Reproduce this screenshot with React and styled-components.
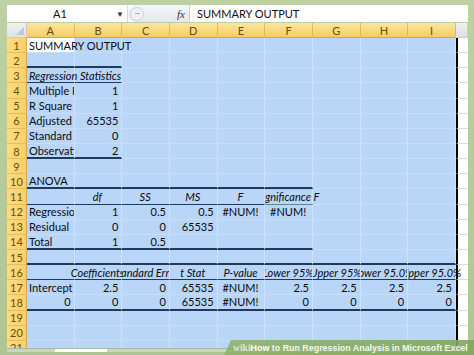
import React from "react";
import styled, { createGlobalStyle } from "styled-components";

const GlobalStyle = createGlobalStyle`
  html, body {
    margin: 0;
    padding: 0;
  }
  body {
    width: 474px;
    height: 355px;
    overflow: hidden;
    background: #b4ca98;
    font-family: Lato, "Open Sans", sans-serif;
  }
`;

const Window = styled.div`
  position: relative;
  width: 474px;
  height: 355px;
  box-sizing: border-box;
  padding: 5px 6px 0 7px;
  background: linear-gradient(#bdd1a3, #aec593);
  overflow: hidden;
`;

const FormulaBar = styled.div`
  display: flex;
  height: 17px;
  margin-bottom: 1px;
  background: #fff;
  font-size: 11px;
  color: #111;
`;

const NameBox = styled.div`
  width: 120px;
  display: grid;
  grid-template-columns: 1fr 14px;
  align-items: center;
  justify-items: center;
  border-right: 1px solid #d3d8de;
`;

const Caret = styled.span`
  font-size: 8px;
  color: #333;
`;

const FxArea = styled.div`
  width: 62px;
  display: flex;
  align-items: center;
  justify-content: space-between;
  padding: 0 4px 0 2px;
  box-sizing: border-box;
  background: linear-gradient(#f4f6f8, #e4e8ec);
  border-radius: 8px 0 0 8px;
  border-right: 1px solid #c9ced5;
`;

const Grip = styled.span`
  width: 12px;
  height: 12px;
  border-radius: 50%;
  background: #eef1f4;
  border: 1px solid #cdd3da;
  display: flex;
  align-items: center;
  justify-content: center;
  &::after {
    content: "";
    width: 5px;
    height: 1px;
    background: #a9b0b8;
  }
`;

const Fx = styled.span`
  font-family: "Liberation Serif", serif;
  font-style: italic;
  font-size: 11px;
  color: #333;
`;

const FormulaInput = styled.div`
  flex: 1;
  display: flex;
  align-items: center;
  padding-left: 7px;
`;

const Sheet = styled.div`
  display: grid;
  grid-template-columns: 20px repeat(9, 47.67px) 12px;
  grid-template-rows: 15px repeat(21, 15.15px);
  height: 325px;
  overflow: hidden;
  font-size: 11px;
`;

const Corner = styled.div`
  background: linear-gradient(#eef0f2, #dfe2e6);
  border-right: 1px solid #c9cdd3;
  border-bottom: 1px solid #c9cdd3;
  display: flex;
  align-items: flex-end;
  justify-content: flex-end;
  padding: 0 2px 2px 0;
`;

const CornerMark = styled.span`
  width: 8px;
  height: 8px;
  background: #c3c8ce;
  clip-path: polygon(100% 0, 100% 100%, 0 100%);
`;

const ColHeader = styled.div`
  box-sizing: border-box;
  display: flex;
  align-items: center;
  justify-content: center;
  background: ${(p) =>
    p.$blank
      ? "linear-gradient(#eef0f3, #dcdfe4)"
      : "linear-gradient(#fce5a0, #f6cd62)"};
  border-right: 1px solid ${(p) => (p.$blank ? "#c9cdd3" : "#e6bb55")};
  border-bottom: 1px solid ${(p) => (p.$blank ? "#c9cdd3" : "#e2a33a")};
  color: #6b4c0c;
`;

const RowHeader = styled.div`
  box-sizing: border-box;
  display: flex;
  align-items: center;
  justify-content: center;
  background: linear-gradient(90deg, #fbdc84, #f8d068);
  border-right: 1px solid #e3a53a;
  border-bottom: 1px solid #e8bd5c;
  color: #6b4c0c;
`;

const lineStyle = {
  thick: "2px solid #1e3a5c",
  thin: "1px solid #1e3a5c",
};

const clipFor = {
  right: "inset(0 -60px 0 0)",
  left: "inset(0 0 0 -60px)",
};

const Cell = styled.div`
  box-sizing: border-box;
  min-width: 0;
  display: flex;
  align-items: center;
  justify-content: ${(p) =>
    p.$align === "r" ? "flex-end" : p.$align === "c" ? "center" : "flex-start"};
  padding: 0 3px 0 2px;
  background: ${(p) => (p.$active ? "#fff" : "#b9d6f9")};
  border-right: 1px solid #cde1f9;
  border-bottom: ${(p) => (p.$line ? lineStyle[p.$line] : "1px solid #c9ddf6")};
  color: #0b0b0b;
  font-style: ${(p) => (p.$italic ? "italic" : "normal")};
  white-space: nowrap;
  overflow: ${(p) => (p.$spill ? "visible" : "hidden")};
  clip-path: ${(p) => (p.$spill ? clipFor[p.$spill] : "none")};
  position: ${(p) => (p.$spill ? "relative" : "static")};
  z-index: ${(p) => (p.$spill ? 1 : "auto")};
`;

const OuterCell = styled.div`
  box-sizing: border-box;
  background: #fff;
  border-left: 2px solid #000;
  border-bottom: 1px solid #d9dde2;
`;

const ScrollStrip = styled.div`
  height: 3px;
  display: flex;
  padding-left: 48px;
  background: #c9d7c1;
  border-top: 1px solid #aab7a3;
`;

const Thumb = styled.span`
  width: 52px;
  background: #fdfdfd;
`;

const Watermark = styled.div`
  position: absolute;
  right: 0;
  bottom: 0;
  height: 15px;
  width: 250px;
  display: flex;
  align-items: center;
  padding-left: 9px;
  box-sizing: border-box;
  background: linear-gradient(90deg, rgba(142, 176, 104, 0.85), rgba(128, 166, 92, 0.9));
  clip-path: polygon(7px 0, 100% 0, 100% 100%, 0 100%);
  font-family: "Liberation Sans", Arial, sans-serif;
  font-weight: bold;
  font-size: 8.9px;
  color: #f4f7ef;
  white-space: nowrap;
`;

const Wiki = styled.span`
  font-family: "Liberation Serif", serif;
  font-size: 9.6px;
  color: #dfe6d6;
`;

const How = styled.span`
  color: #ffffff;
`;

const COLS = ["A", "B", "C", "D", "E", "F", "G", "H", "I"];

const r = (t) => ({ t, a: "r" });
const h = (t, spill) => ({ t, a: "c", i: true, spill });
const err = { t: "#NUM!", a: "c" };

const data = {
  1: { A: { t: "SUMMARY OUTPUT", spill: "right", active: true } },
  3: { A: { t: "Regression Statistics", i: true, spill: "right" } },
  4: { A: { t: "Multiple R" }, B: r("1") },
  5: { A: { t: "R Square" }, B: r("1") },
  6: { A: { t: "Adjusted R Square" }, B: r("65535") },
  7: { A: { t: "Standard Error" }, B: r("0") },
  8: { A: { t: "Observations" }, B: r("2") },
  10: { A: { t: "ANOVA" } },
  11: {
    B: h("df"),
    C: h("SS"),
    D: h("MS"),
    E: h("F"),
    F: h("Significance F", "right"),
  },
  12: {
    A: { t: "Regression" },
    B: r("1"),
    C: r("0.5"),
    D: r("0.5"),
    E: err,
    F: err,
  },
  13: { A: { t: "Residual" }, B: r("0"), C: r("0"), D: r("65535") },
  14: { A: { t: "Total" }, B: r("1"), C: r("0.5") },
  16: {
    B: h("Coefficients", "left"),
    C: h("Standard Error"),
    D: h("t Stat"),
    E: h("P-value"),
    F: h("Lower 95%"),
    G: h("Upper 95%"),
    H: h("Lower 95.0%"),
    I: h("Upper 95.0%", "right"),
  },
  17: {
    A: { t: "Intercept" },
    B: r("2.5"),
    C: r("0"),
    D: r("65535"),
    E: err,
    F: r("2.5"),
    G: r("2.5"),
    H: r("2.5"),
    I: r("2.5"),
  },
  18: {
    A: r("0"),
    B: r("0"),
    C: r("0"),
    D: r("65535"),
    E: err,
    F: r("0"),
    G: r("0"),
    H: r("0"),
    I: r("0"),
  },
};

// bottom rules of the output tables: [weight, number of columns from A]
const rules = {
  2: ["thick", 2],
  3: ["thin", 2],
  8: ["thick", 2],
  10: ["thick", 6],
  11: ["thin", 6],
  14: ["thick", 6],
  15: ["thick", 9],
  16: ["thin", 9],
  18: ["thick", 9],
};

const rows = Array.from({ length: 21 }, (_, i) => i + 1);

const App = () => {
  return (
    <>
      <GlobalStyle />
      <Window>
        <FormulaBar>
          <NameBox>
            <span>A1</span>
            <Caret>▼</Caret>
          </NameBox>
          <FxArea>
            <Grip />
            <Fx>fx</Fx>
          </FxArea>
          <FormulaInput>SUMMARY OUTPUT</FormulaInput>
        </FormulaBar>

        <Sheet>
          <Corner>
            <CornerMark />
          </Corner>
          {COLS.map((c) => (
            <ColHeader key={c}>{c}</ColHeader>
          ))}
          <ColHeader $blank />

          {rows.map((n) => {
            const row = data[n] || {};
            const rule = rules[n];
            return (
              <React.Fragment key={n}>
                <RowHeader>{n}</RowHeader>
                {COLS.map((c, ci) => {
                  const cell = row[c] || {};
                  return (
                    <Cell
                      key={c}
                      $align={cell.a}
                      $italic={cell.i}
                      $spill={cell.spill}
                      $active={cell.active}
                      $line={rule && ci < rule[1] ? rule[0] : null}
                    >
                      {cell.t}
                    </Cell>
                  );
                })}
                <OuterCell />
              </React.Fragment>
            );
          })}
        </Sheet>
        <ScrollStrip>
          <Thumb />
        </ScrollStrip>

        <Watermark>
          <Wiki>wiki</Wiki>
          <How>How</How>&nbsp;to Run Regression Analysis in Microsoft Excel
        </Watermark>
      </Window>
    </>
  );
};

export default App;
